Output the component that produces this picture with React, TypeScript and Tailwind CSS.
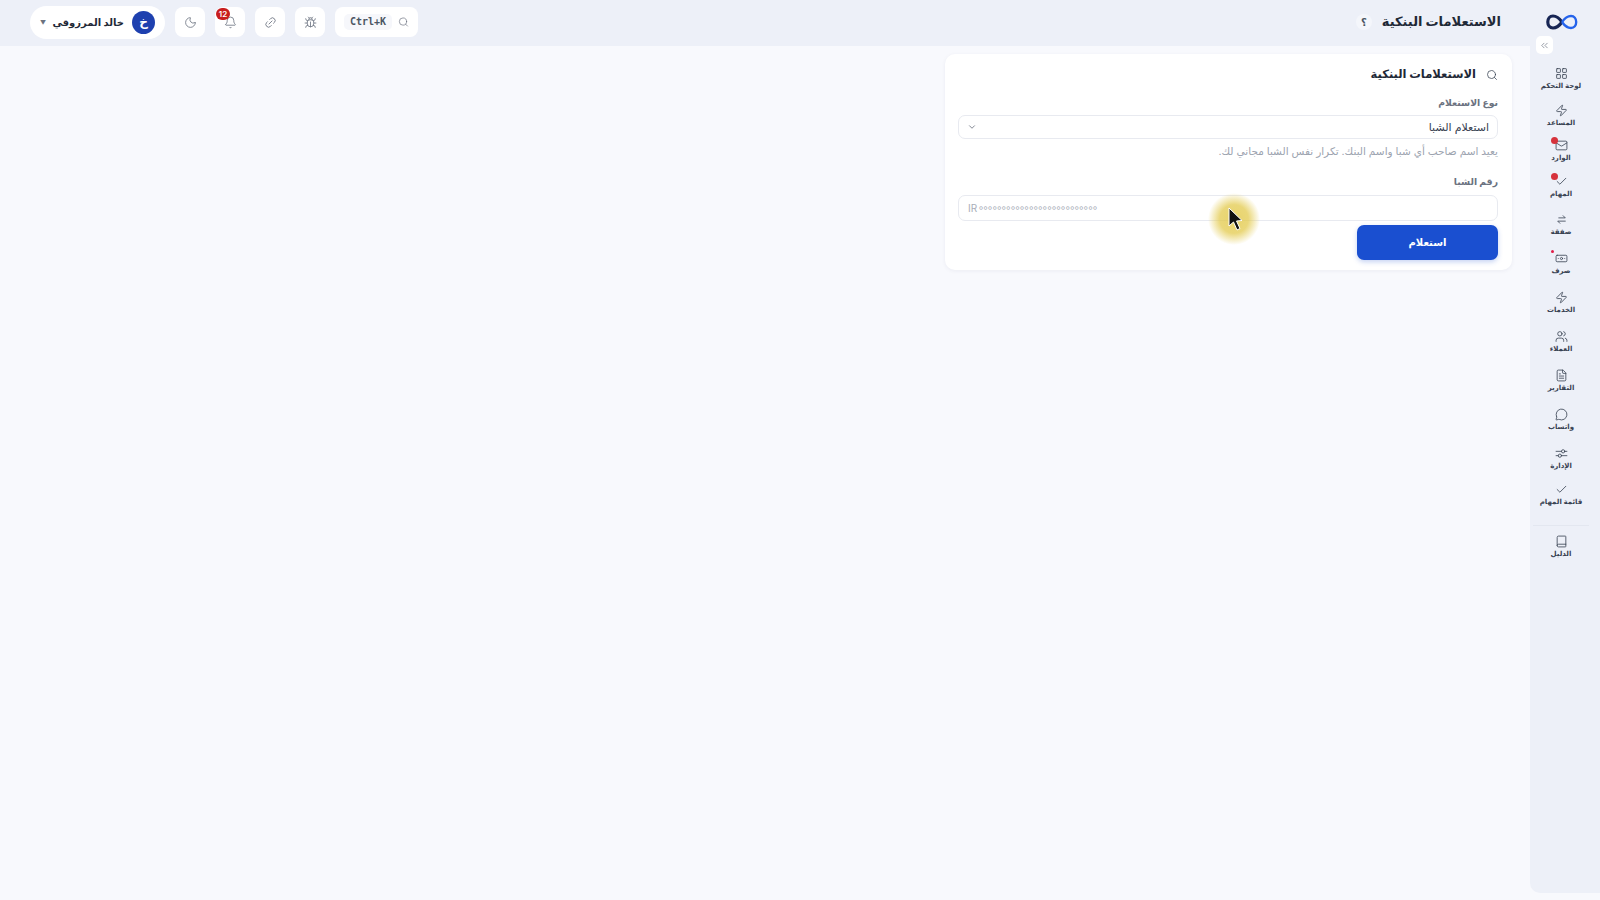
import {
  Banknote,
  Bell,
  Book,
  Bug,
  Check,
  ChevronDown,
  ChevronsLeft,
  FileText,
  LayoutGrid,
  Link2,
  Mail,
  MessageCircle,
  Moon,
  Search,
  Users,
  Zap,
} from 'lucide-react';

const FONT = "font-['Inter','DejaVu_Sans',sans-serif]";

// two opposed harpoons, lucide has nothing this plain
function DealIcon({ size = 13, strokeWidth = 1.5 }: { size?: number; strokeWidth?: number }) {
  return (
    <svg width={size} height={size} viewBox="0 0 24 24" fill="none" stroke="currentColor" strokeWidth={strokeWidth} strokeLinecap="round" strokeLinejoin="round">
      <path d="M7 9h12l-4-4" />
      <path d="M19 15H5l4 4" />
    </svg>
  );
}

function AdminIcon({ size = 13, strokeWidth = 1.5 }: { size?: number; strokeWidth?: number }) {
  return (
    <svg width={size} height={size} viewBox="0 0 24 24" fill="none" stroke="currentColor" strokeWidth={strokeWidth} strokeLinecap="round">
      <path d="M2 8h10M18 8h4M2 16h4M12 16h10" />
      <circle cx="15" cy="8" r="3" />
      <circle cx="9" cy="16" r="3" />
    </svg>
  );
}

const NAV = [
  { label: 'لوحة التحكم', icon: LayoutGrid, h: 'h-[37px]' },
  { label: 'المساعد', icon: Zap, h: 'h-[35px]' },
  { label: 'الوارد', icon: Mail, h: 'h-[36px]', dot: 'big' },
  { label: 'المهام', icon: Check, h: 'h-[38px]', dot: 'big' },
  { label: 'صفقة', icon: DealIcon, h: 'h-[39px]' },
  { label: 'صرف', icon: Banknote, h: 'h-[39px]', dot: 'small' },
  { label: 'الخدمات', icon: Zap, h: 'h-[39px]' },
  { label: 'العملاء', icon: Users, h: 'h-[39px]' },
  { label: 'التقارير', icon: FileText, h: 'h-[39px]' },
  { label: 'واتساب', icon: MessageCircle, h: 'h-[39px]' },
  { label: 'الإدارة', icon: AdminIcon, h: 'h-[36px]' },
  { label: 'قائمة المهام', icon: Check, h: 'h-[43px]' },
];

function NavItem({ label, icon: Icon, h, dot }: { label: string; icon: React.ComponentType<{ size?: number; strokeWidth?: number }>; h: string; dot?: string }) {
  return (
    <div className={`${h} flex flex-col items-center text-[#374151]`}>
      <div className="relative flex h-[14px] items-center justify-center">
        <Icon size={13} strokeWidth={1.5} />
        {dot === 'big' && <span className="absolute -top-[1px] -left-[4px] h-[7px] w-[7px] rounded-full bg-[#d6323c]" />}
        {dot === 'small' && <span className="absolute -top-[1px] -left-[4px] h-[3px] w-[3px] rounded-full bg-[#e11d48]" />}
      </div>
      <span className="text-[7px] leading-[11px] font-bold whitespace-nowrap">{label}</span>
    </div>
  );
}

function IconButton({ children }: { children: React.ReactNode }) {
  return (
    <button className="relative flex h-[30px] w-[30px] items-center justify-center rounded-[8px] bg-white text-[#6b7280]">
      {children}
    </button>
  );
}

export default function App() {
  return (
    <div dir="rtl" className={`relative flex h-screen flex-col overflow-hidden bg-[#f8f9fd] ${FONT}`}>
      <header className="flex h-[46px] shrink-0 items-center justify-between bg-[#edf0f8] pr-[22px] pb-[2px] pl-[30px]">
        <div className="flex items-center">
          <svg width="32" height="16" viewBox="0 0 32 16" fill="none">
            <path d="M16 8 C12.5 3 10 2 7 2 C3.8 2 1.8 4.6 1.8 8 C1.8 11.4 3.8 14 7 14 C10 14 12.5 13 16 8" stroke="#172554" strokeWidth="3.2" />
            <path d="M16 8 C19.5 3 22 2 25 2 C28.2 2 30.2 4.6 30.2 8 C30.2 11.4 28.2 14 25 14 C22 14 19.5 13 16 8" stroke="#2563eb" strokeWidth="2.4" />
          </svg>
          <h1 className="mr-[45px] text-[13px] font-bold whitespace-nowrap text-[#1f2937]">الاستعلامات البنكية</h1>
          <span className="mr-[10px] flex h-[16px] w-[16px] items-center justify-center rounded-full bg-[#f4f6fb] text-[10px] font-bold text-[#4b5563]">؟</span>
        </div>

        <div className="flex items-center gap-[10px]">
          <div className="flex h-[30px] w-[83px] items-center gap-[6px] rounded-[8px] bg-white px-[9px] text-[#6b7280]">
            <Search size={12} strokeWidth={1.5} />
            <span className="rounded-[5px] bg-[#f6f7fb] px-[6px] font-['DejaVu_Sans_Mono',monospace] text-[10px] leading-[16px] font-bold text-[#4b5563]">Ctrl+K</span>
          </div>
          <IconButton><Bug size={13} strokeWidth={1.5} /></IconButton>
          <IconButton><Link2 size={13} strokeWidth={1.5} className="-rotate-45" /></IconButton>
          <IconButton>
            <Bell size={13} strokeWidth={1.5} />
            <span className="absolute top-[1px] left-[1px] flex h-[12px] w-[14px] items-center justify-center rounded-full bg-[#c81e1e] text-[8px] font-semibold text-white">12</span>
          </IconButton>
          <IconButton><Moon size={13} strokeWidth={1.5} /></IconButton>
          <div className="flex h-[33px] w-[135px] items-center rounded-full bg-white pr-[10px] pl-[10px]">
            <span className="flex h-[23px] w-[23px] shrink-0 items-center justify-center rounded-full bg-[#1e40af] text-[12px] font-bold text-white">خ</span>
            <span className="mr-[8px] text-[10px] font-bold whitespace-nowrap text-[#1f2937]">خالد المرزوقي</span>
            <span className="mr-auto text-[6px] text-[#6b7280]">▼</span>
          </div>
        </div>
      </header>

      <div className="flex min-h-0 flex-1">
        <aside className="mb-[7px] flex w-[70px] shrink-0 flex-col items-center rounded-bl-[10px] bg-[#edf0f8] pt-[20px] pr-[8px]">
          {NAV.map((n) => <NavItem key={n.label} {...n} />)}
          <div className="mb-[8px] h-px w-[56px] bg-[#e3e7f0]" />
          <NavItem label="الدليل" icon={Book} h="h-[36px]" />
        </aside>

        <main className="min-w-0 flex-1 pt-[8px] pr-[18px]">
          <section className="h-[216px] w-[567px] rounded-[10px] bg-white pt-[12px] pr-[14px] pl-[13px] shadow-[0_1px_4px_rgba(30,41,80,0.06)]">
            <div className="flex h-[18px] items-center gap-[10px]">
              <Search size={12} strokeWidth={1.5} className="text-[#374151]" />
              <h2 className="text-[11.5px] font-bold text-[#1f2937]">الاستعلامات البنكية</h2>
            </div>
            <label className="mt-[11px] block text-[9.25px] leading-[15px] font-bold text-[#6b7280]">نوع الاستعلام</label>
            <div className="mt-[5px] flex h-[24px] items-center justify-between rounded-[7px] border border-[#e8eaf0] px-[8px] text-[11px] text-[#374151]">
              <span>استعلام الشبا</span>
              <ChevronDown size={10} className="text-[#6b7280]" />
            </div>
            <p className="mt-[6px] text-[10.5px] leading-[14px] text-[#9ca3af]">يعيد اسم صاحب أي شبا واسم البنك. تكرار نفس الشبا مجاني لك.</p>
            <label className="mt-[15px] block text-[9.25px] leading-[15px] font-bold text-[#6b7280]">رقم الشبا</label>
            <div className="relative mt-[6px]">
              <input
                dir="ltr"
                readOnly
                placeholder="IR"
                className="block h-[26px] w-full rounded-[7px] border border-[#e8eaf0] px-[9px] text-[10px] outline-none placeholder:text-[#a8adb8]"
              />
              <span dir="ltr" className="pointer-events-none absolute top-[5px] left-[20px] text-[10px] leading-[15px] tracking-[-1.7px] text-[#a8adb8]">∘∘∘∘∘∘∘∘∘∘∘∘∘∘∘∘∘∘∘∘∘∘∘∘∘∘</span>
            </div>
            <button className="mt-[4px] h-[35px] w-[141px] rounded-[7px] bg-[#1a4fd0] text-[10px] font-bold text-white shadow-[0_2px_5px_rgba(26,79,208,0.25)]">استعلام</button>
          </section>
        </main>
      </div>

      {/* collapse button sits over the header/sidebar edge */}
      <button className="absolute top-[36px] right-[47px] flex h-[18px] w-[17px] items-center justify-center rounded-[5px] bg-white text-[#6b7280]">
        <ChevronsLeft size={11} strokeWidth={1.5} />
      </button>

      {/* recorded mouse pointer */}
      <div className="pointer-events-none absolute top-[193px] left-[1208px] h-[52px] w-[52px] rounded-full bg-[radial-gradient(circle_closest-side,rgba(226,200,70,0.8)_0%,rgba(226,200,70,0.72)_55%,rgba(226,200,70,0)_100%)]" />
      <svg className="pointer-events-none absolute top-[207px] left-[1227px]" width="17" height="25" viewBox="0 0 17 25">
        <path d="M2 1 L2 19 L6.5 15 L10 23 L13 21.5 L9.5 14 L15 13.5 Z" fill="#111" stroke="#fff" strokeWidth="1" />
      </svg>
    </div>
  );
}
